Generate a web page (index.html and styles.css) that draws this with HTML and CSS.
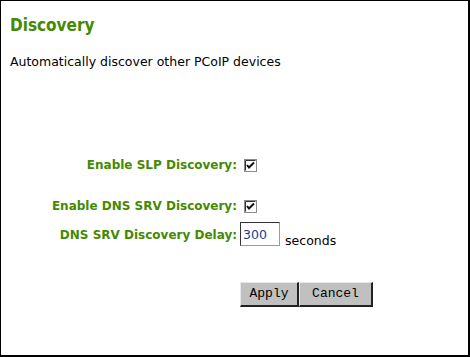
FILE: index.html
```html
<!DOCTYPE html>
<html lang="en">
<head>
  <meta charset="UTF-8" />
  <title>Discovery</title>
  <link rel="stylesheet" href="styles.css">
</head>
<body>

<div class="panel">
  <h1>Discovery</h1>
  <p class="desc">Automatically discover other PCoIP devices</p>

  <div class="form">
    <div class="row first">
      <label>Enable SLP Discovery:</label>
      <span class="check">
        <svg width="13" height="13" viewBox="0 0 13 13"><rect x="0.5" y="0.5" width="12" height="12" fill="#fff" stroke="#8a8a8a"/><path d="M1.5 11.5 V1.5 H11.5" fill="none" stroke="#333"/><path d="M3 6 L5 8.5 L10 3.5" fill="none" stroke="#111" stroke-width="2"/></svg>
      </span>
    </div>
    <div class="row second">
      <label>Enable DNS SRV Discovery:</label>
      <span class="check">
        <svg width="13" height="13" viewBox="0 0 13 13"><rect x="0.5" y="0.5" width="12" height="12" fill="#fff" stroke="#8a8a8a"/><path d="M1.5 11.5 V1.5 H11.5" fill="none" stroke="#333"/><path d="M3 6 L5 8.5 L10 3.5" fill="none" stroke="#111" stroke-width="2"/></svg>
      </span>
    </div>
    <div class="row third">
      <label>DNS SRV Discovery Delay:</label>
      <span><input type="text" class="delay" value="300"> <span class="unit">seconds</span></span>
    </div>
  </div>

  <div class="buttons">
    <button class="apply">Apply</button><button class="cancel">Cancel</button>
  </div>
</div>

</body>
</html>
```

FILE: styles.css
```css
* { box-sizing: border-box; }
body {
  margin: 0;
  font-family: "DejaVu Sans", Verdana, sans-serif;
  background: #fff;
  color: #000;
}

.panel {
  width: 470px;
  height: 357px;
  border-style: solid;
  border-color: #000;
  border-width: 1px 2px 2px 1px;
  padding: 0 9px;
}

h1 {
  margin: 14px 0 0;
  font-family: "DejaVu Sans Condensed", "DejaVu Sans", sans-serif;
  font-size: 17px;
  line-height: 20px;
  color: #448a00;
}

.desc {
  margin: 19px 0 0;
  font-size: 12.5px;
  line-height: 16px;
}

.form {
  margin-top: 88px;
}

.row {
  display: grid;
  grid-template-columns: 227px auto;
  column-gap: 7px;
  align-items: center;
}

.row label {
  text-align: right;
  font-size: 12px;
  font-weight: bold;
  color: #448a00;
}

.check { display: flex; }

.second { margin-top: 27px; }
.third { margin-top: 9px; column-gap: 3px; }

.delay {
  width: 40px;
  height: 24px;
  padding: 0 2px;
  font-family: "DejaVu Sans", sans-serif;
  font-size: 12.5px;
  color: #1a3c9a;
  border: 1px solid #9a9a9a;
  border-top-color: #333;
  border-left-color: #333;
  vertical-align: middle;
}

.unit {
  font-size: 12.5px;
  vertical-align: -6px;
}

.buttons {
  margin: 34px 0 0 230px;
  display: flex;
}

.buttons button {
  height: 25px;
  padding: 0;
  font-family: "Liberation Mono", "Courier New", monospace;
  font-size: 13px;
  color: #000;
  background: #c0c0c0;
  border-style: solid;
  border-width: 1px 2px 2px 1px;
  border-color: #e8e8e8 #222 #222 #e8e8e8;
}
.apply { width: 59px; }
.cancel { width: 74px; }
```
